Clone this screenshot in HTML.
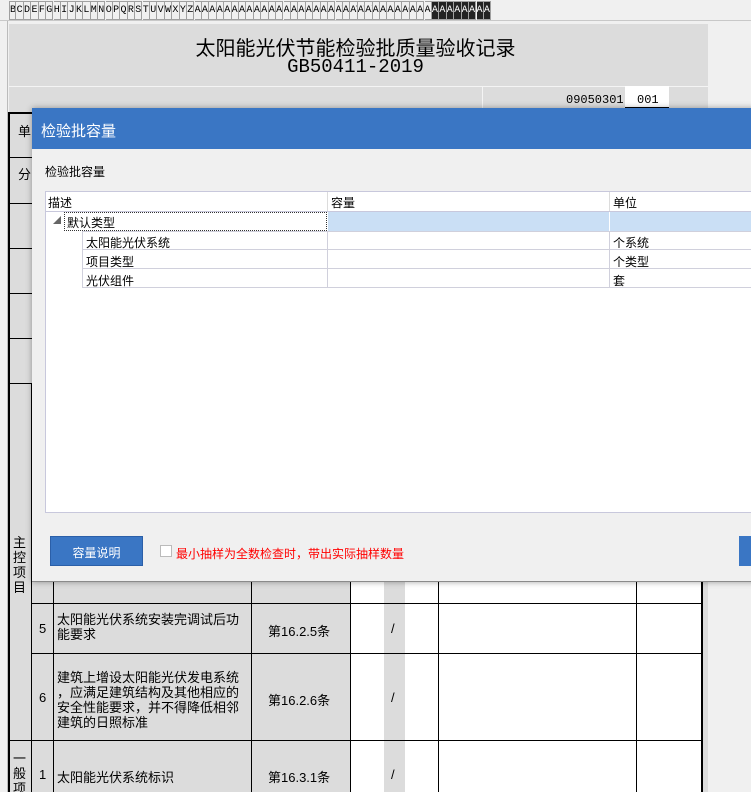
<!DOCTYPE html>
<html style="overflow:hidden;width:751px;height:792px"><head><meta charset="utf-8"><style>
*{margin:0;padding:0;box-sizing:border-box}
body{width:751px;height:792px;overflow:hidden;background:#f0f0f0;position:relative;font-family:"Liberation Sans","Noto Sans CJK SC",sans-serif;}
.a{position:absolute}
.hdr{top:0;left:0;width:751px;height:21px;background:#f0f0f0;border-bottom:1px solid #c8c8c8}
.hc{position:absolute;top:1px;height:19px;width:7.4px;border-right:1px solid #a0a0a0;border-top:1px solid #a0a0a0;border-bottom:1px solid #a0a0a0;font:10px "Liberation Mono",monospace;text-align:center;line-height:17px;overflow:hidden;color:#000}
.t{font-family:"Liberation Sans","Noto Sans CJK SC",sans-serif;font-size:13px;color:#000;white-space:nowrap}
.v{background:#000}
</style></head><body>
<div class="a hdr" id="h"></div>
<div class="a" style="left:0;top:21px;width:8px;height:771px;background:#f0f0f0;border-right:1px solid #bbb"></div>
<!-- sheet -->
<div class="a" style="left:9px;top:24px;width:699px;height:768px;background:#dcdcdc"></div>
<div class="a" style="left:9px;top:86px;width:699px;height:1px;background:#f4f4f4"></div>
<div class="a" style="left:482px;top:86px;width:1px;height:24px;background:#f4f4f4"></div>
<div class="a t" style="left:0;width:751px;top:32px;text-align:center;font-size:20px;padding-right:40px">太阳能光伏节能检验批质量验收记录</div>
<div class="a t" style="left:0;width:751px;top:56px;text-align:center;font-size:19px;padding-right:40px;font-family:'Liberation Mono',monospace">GB50411-2019</div>
<div class="a t" style="left:566px;top:93px;font-size:12px;font-family:'Liberation Mono',monospace">09050301</div>
<div class="a" style="left:625px;top:86px;width:44px;height:22px;background:#fff;border-bottom:1px solid #000"></div>
<div class="a t" style="left:637px;top:93px;font-size:12px;font-family:'Liberation Mono',monospace">001</div>
<!-- left column -->
<div class="a v" style="left:8px;top:112px;width:2px;height:680px"></div>
<div class="a v" style="left:9px;top:112px;width:25px;height:2px"></div>
<div class="a v" style="left:9px;top:157px;width:25px;height:1px"></div>
<div class="a v" style="left:9px;top:203px;width:25px;height:1px"></div>
<div class="a v" style="left:9px;top:248px;width:25px;height:1px"></div>
<div class="a v" style="left:9px;top:293px;width:25px;height:1px"></div>
<div class="a v" style="left:9px;top:338px;width:25px;height:1px"></div>
<div class="a v" style="left:9px;top:383px;width:25px;height:1px"></div>
<div class="a v" style="left:31px;top:383px;width:1px;height:409px"></div>
<div class="a t" style="left:18px;top:121px">单</div>
<div class="a t" style="left:18px;top:164px">分</div>
<div class="a t" style="left:13px;top:535px;width:14px;line-height:15px;white-space:normal;font-size:13px">主控项目</div>
<div class="a" style="left:10px;top:741px;width:21px;height:51px;overflow:hidden"><div class="t" style="margin:10px 0 0 3px;width:14px;line-height:15px;white-space:normal;font-size:13px">一般项目</div></div>
<!-- table below dialog -->
<div class="a" style="left:351px;top:582px;width:33px;height:210px;background:#fff"></div>
<div class="a" style="left:405px;top:582px;width:296px;height:210px;background:#fff"></div>
<div class="a v" style="left:9px;top:740px;width:692px;height:1px"></div>
<div class="a v" style="left:31px;top:603px;width:670px;height:1px"></div>
<div class="a v" style="left:31px;top:653px;width:670px;height:1px"></div>
<div class="a v" style="left:53px;top:582px;width:1px;height:210px"></div>
<div class="a v" style="left:251px;top:582px;width:1px;height:210px"></div>
<div class="a v" style="left:350px;top:582px;width:1px;height:210px"></div>
<div class="a v" style="left:438px;top:582px;width:1px;height:210px"></div>
<div class="a v" style="left:636px;top:582px;width:1px;height:210px"></div>
<div class="a v" style="left:701px;top:582px;width:2px;height:210px"></div>
<div class="a t" style="left:39px;top:621px">5</div>
<div class="a t" style="left:57px;top:612px;line-height:15px">太阳能光伏系统安装完调试后功<br>能要求</div>
<div class="a t" style="left:268px;top:621px">第16.2.5条</div>
<div class="a t" style="left:391px;top:621px">/</div>
<div class="a t" style="left:39px;top:690px">6</div>
<div class="a t" style="left:57px;top:670px;line-height:15px">建筑上增设太阳能光伏发电系统<br>，应满足建筑结构及其他相应的<br>安全性能要求，并不得降低相邻<br>建筑的日照标准</div>
<div class="a t" style="left:268px;top:690px">第16.2.6条</div>
<div class="a t" style="left:391px;top:690px">/</div>
<div class="a t" style="left:39px;top:767px">1</div>
<div class="a t" style="left:57px;top:767px">太阳能光伏系统标识</div>
<div class="a t" style="left:268px;top:767px">第16.3.1条</div>
<div class="a t" style="left:391px;top:767px">/</div>
<!-- dialog -->
<div class="a" style="left:32px;top:108px;width:730px;height:474px;background:#f0f0f0;box-shadow:0 0 6px rgba(0,0,0,.35);border-bottom:1px solid #8a8a8a"></div>
<div class="a" style="left:32px;top:108px;width:719px;height:41px;background:#3a76c4"></div>
<div class="a t" style="left:41px;top:120px;color:#fff;font-size:15px">检验批容量</div>
<div class="a t" style="left:45px;top:163px;font-size:12px">检验批容量</div>
<div class="a" style="left:45px;top:191px;width:710px;height:322px;background:#fff;border:1px solid #c8c8dc"></div>
<div class="a" style="left:46px;top:211px;width:705px;height:1px;background:#c8c8dc"></div>
<div class="a" style="left:327px;top:192px;width:1px;height:19px;background:#dcdcdc"></div>
<div class="a" style="left:609px;top:192px;width:1px;height:19px;background:#dcdcdc"></div>
<div class="a t" style="left:48px;top:194px;font-size:12px">描述</div>
<div class="a t" style="left:331px;top:194px;font-size:12px">容量</div>
<div class="a t" style="left:613px;top:194px;font-size:12px">单位</div>
<div class="a" style="left:328px;top:212px;width:423px;height:19px;background:#cadff5"></div>
<div class="a" style="left:609px;top:212px;width:1px;height:19px;background:#fff"></div>
<div class="a" style="left:64px;top:212px;width:263px;height:19px;border:1px dotted #333"></div>
<div class="a t" style="left:53px;top:215px;font-size:8px;color:#666">◢</div>
<div class="a t" style="left:67px;top:214px;font-size:12px">默认类型</div>
<div class="a" style="left:82px;top:231px;width:669px;height:57px;border-top:1px solid #d0d0dc;border-left:1px solid #d0d0dc"></div>
<div class="a" style="left:82px;top:249px;width:669px;height:1px;background:#d0d0dc"></div>
<div class="a" style="left:82px;top:268px;width:669px;height:1px;background:#d0d0dc"></div>
<div class="a" style="left:82px;top:287px;width:669px;height:1px;background:#d0d0dc"></div>
<div class="a" style="left:327px;top:231px;width:1px;height:57px;background:#d0d0dc"></div>
<div class="a" style="left:609px;top:231px;width:1px;height:57px;background:#d0d0dc"></div>
<div class="a t" style="left:86px;top:234px;font-size:12px">太阳能光伏系统</div>
<div class="a t" style="left:613px;top:234px;font-size:12px">个系统</div>
<div class="a t" style="left:86px;top:253px;font-size:12px">项目类型</div>
<div class="a t" style="left:613px;top:253px;font-size:12px">个类型</div>
<div class="a t" style="left:86px;top:272px;font-size:12px">光伏组件</div>
<div class="a t" style="left:613px;top:272px;font-size:12px">套</div>
<div class="a" style="left:50px;top:536px;width:93px;height:30px;background:#3a76c4;border:1px solid #2b5fa8"></div>
<div class="a t" style="left:50px;top:544px;width:93px;text-align:center;color:#fff;font-size:12px">容量说明</div>
<div class="a" style="left:160px;top:545px;width:12px;height:12px;background:#fff;border:1px solid #bbb"></div>
<div class="a t" style="left:176px;top:545px;color:#f00;font-size:12px">最小抽样为全数检查时，带出实际抽样数量</div>
<div class="a" style="left:739px;top:536px;width:12px;height:30px;background:#3a76c4"></div>
<script>
var h=document.getElementById('h'),L=[];
'BCDEFGHIJKLMNOPQRSTUVWXYZ'.split('').forEach(function(c){L.push(c)});
for(var i=0;i<40;i++)L.push('A'+String.fromCharCode(65+i%26));
var s='';for(var i=0;i<L.length;i++){s+='<div class="hc" style="left:'+(9+i*7.42).toFixed(1)+'px;'+(i==0?'border-left:1px solid #a0a0a0;':'')+(i>=57?'background:#222;color:#fff;':'')+'">'+L[i]+'</div>';}
h.innerHTML=s;
</script>
</body></html>
